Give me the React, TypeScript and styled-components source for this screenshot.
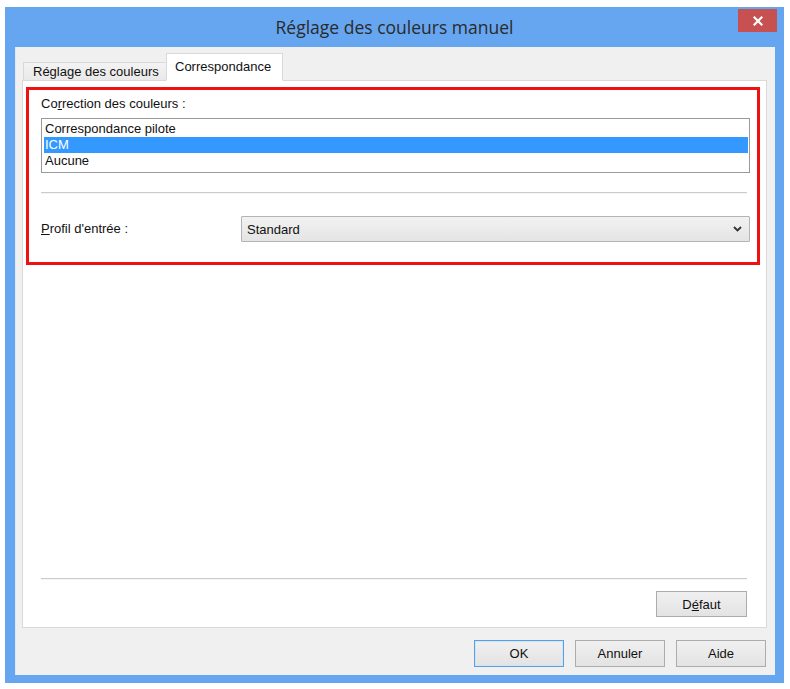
import React from 'react';
import styled, { createGlobalStyle } from 'styled-components';

const Global = createGlobalStyle`
  html, body { margin: 0; padding: 0; background: #ffffff; }
  body { font-family: "Liberation Sans", Arial, sans-serif; font-size: 13px; color: #111111; }
  * { box-sizing: border-box; }
`;

const Page = styled.div`
  padding: 7px 0 0 5px;
`;

const Window = styled.div`
  width: 779px;
  height: 676px;
  background: #66a6f0;
  display: flex;
  flex-direction: column;
`;

const TitleBar = styled.div`
  height: 40px;
  display: grid;
  grid-template-columns: 1fr auto 1fr;
  align-items: start;
`;

const Title = styled.div`
  grid-column: 2;
  line-height: 40px;
  font-family: "Open Sans", "Liberation Sans", sans-serif;
  font-size: 17.5px;
  color: #2a2a2a;
  white-space: nowrap;
`;

const CloseButton = styled.div`
  grid-column: 3;
  justify-self: end;
  margin: 2px 7px 0 0;
  width: 39px;
  height: 23px;
  background: #c75050;
  display: flex;
  align-items: center;
  justify-content: center;
`;

const Body = styled.div`
  flex: 1;
  margin: 0 9px 8px 10px;
  background: #f0f0f0;
  display: flex;
  flex-direction: column;
  padding: 6px 8px 8px 7px;
  box-shadow: inset 1px 0 0 #dfe9f7;
`;

const Tabs = styled.div`
  height: 28px;
  display: flex;
  align-items: flex-end;
  padding-left: 1px;
  margin-bottom: -1px;
  position: relative;
  z-index: 1;
`;

const Tab = styled.div<{ $active?: boolean }>`
  height: ${(p) => (p.$active ? '28px' : '19px')};
  width: ${(p) => (p.$active ? '117px' : '144px')};
  margin-right: ${(p) => (p.$active ? '0' : '-1px')};
  border: 1px solid #d9d9d9;
  border-bottom: ${(p) => (p.$active ? '1px solid #ffffff' : '1px solid #d9d9d9')};
  background: ${(p) => (p.$active ? '#ffffff' : 'linear-gradient(#f3f3f3, #e9e9e9)')};
  padding: ${(p) => (p.$active ? '4px 0 0 8px' : '0 0 0 9px')};
  line-height: 17px;
  white-space: nowrap;
`;

const Panel = styled.div`
  flex: 1;
  background: #ffffff;
  border: 1px solid #d9d9d9;
  display: flex;
  flex-direction: column;
  padding: 6px 6px 10px 3px;
`;

const Highlight = styled.div`
  border: 3px solid #ee1111;
  padding: 6px 7px 20px 12px;
  display: flex;
  flex-direction: column;
`;

const Label = styled.div`
  line-height: 16px;
  white-space: nowrap;
`;

const ListBox = styled.div`
  margin-top: 6px;
  height: 55px;
  border: 1px solid #9a9a9a;
  padding: 2px 1px 2px 2px;
`;

const ListItem = styled.div<{ $selected?: boolean }>`
  height: 16px;
  line-height: 16px;
  padding-left: 1px;
  background: ${(p) => (p.$selected ? '#3399ff' : 'transparent')};
  color: ${(p) => (p.$selected ? '#ffffff' : '#111111')};
`;

const Separator = styled.div<{ $top: number }>`
  margin-top: ${(p) => p.$top}px;
  height: 2px;
  border-top: 1px solid #cccccc;
  border-bottom: 1px solid #f4f4f4;
`;

const InnerSep = styled(Separator)`
  margin-right: 3px;
`;

const ProfileRow = styled.div`
  margin-top: 22px;
  display: grid;
  grid-template-columns: 200px 1fr;
  align-items: center;
`;

const Combo = styled.div`
  height: 26px;
  border: 1px solid #b4b4b4;
  background: linear-gradient(#f2f2f2, #e4e4e4);
  border-radius: 1px;
  display: flex;
  align-items: center;
  justify-content: space-between;
  padding: 0 7px 0 5px;
`;

const Spacer = styled.div`
  flex: 1;
`;

const Footer = styled.div`
  margin: 0 13px 0 15px;
  display: flex;
  flex-direction: column;
  align-items: flex-end;
`;

const Button = styled.div<{ $default?: boolean; $w?: number; $h?: number }>`
  width: ${(p) => p.$w ?? 90}px;
  height: ${(p) => p.$h ?? 27}px;
  border: 1px solid ${(p) => (p.$default ? '#5b9ee3' : '#acacac')};
  box-shadow: ${(p) => (p.$default ? 'inset 0 0 0 1px #cfe5fa' : 'none')};
  background: linear-gradient(#f0f0f0, #e3e3e3);
  display: flex;
  align-items: center;
  justify-content: center;
`;

const FooterButton = styled(Button)`
  margin-top: 11px;
`;

const ButtonRow = styled.div`
  margin-top: 12px;
  display: flex;
  justify-content: flex-end;
  gap: 11px;
  padding-right: 1px;
`;

const U = styled.span`
  text-decoration: underline;
`;

export default function App() {
  return (
    <>
      <Global />
      <Page>
        <Window>
          <TitleBar>
            <Title>Réglage des couleurs manuel</Title>
            <CloseButton>
              <svg width="10" height="10" viewBox="0 0 10 10">
                <path d="M1.5 1.5 L8.5 8.5 M8.5 1.5 L1.5 8.5" stroke="#ffffff" strokeWidth="2.2" strokeLinecap="square" />
              </svg>
            </CloseButton>
          </TitleBar>
          <Body>
            <Tabs>
              <Tab>Réglage des couleurs</Tab>
              <Tab $active>Correspondance</Tab>
            </Tabs>
            <Panel>
              <Highlight>
                <Label>
                  Co<U>r</U>rection des couleurs :
                </Label>
                <ListBox>
                  <ListItem>Correspondance pilote</ListItem>
                  <ListItem $selected>ICM</ListItem>
                  <ListItem>Aucune</ListItem>
                </ListBox>
                <InnerSep $top={19} />
                <ProfileRow>
                  <Label>
                    <U>P</U>rofil d'entrée :
                  </Label>
                  <Combo>
                    <span>Standard</span>
                    <svg width="9" height="6" viewBox="0 0 9 6">
                      <polyline points="1,1 4.5,4.5 8,1" fill="none" stroke="#333333" strokeWidth="1.8" />
                    </svg>
                  </Combo>
                </ProfileRow>
              </Highlight>
              <Spacer />
              <Footer>
                <Separator $top={0} style={{ alignSelf: 'stretch' }} />
                <FooterButton $w={91} $h={26}>
                  D<U>é</U>faut
                </FooterButton>
              </Footer>
            </Panel>
            <ButtonRow>
              <Button $default>OK</Button>
              <Button>Annuler</Button>
              <Button>Aide</Button>
            </ButtonRow>
          </Body>
        </Window>
      </Page>
    </>
  );
}
